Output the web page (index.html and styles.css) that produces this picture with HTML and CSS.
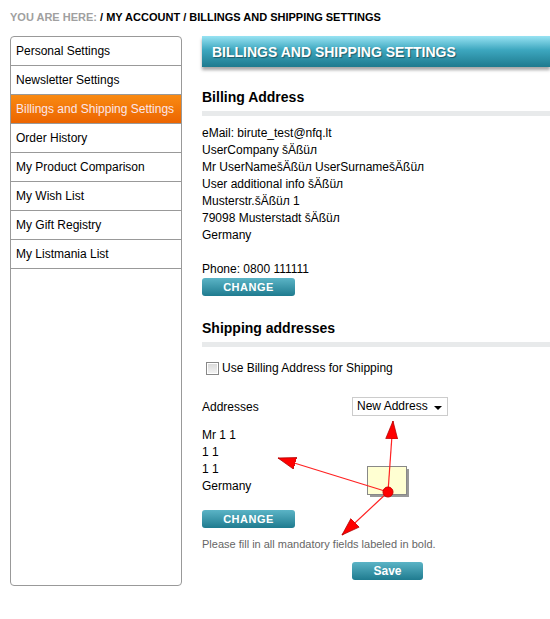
FILE: index.html
```html
<!DOCTYPE html>
<html lang="en">
<head>
  <meta charset="UTF-8">
  <title>My Account - Billings and Shipping Settings</title>
  <link rel="stylesheet" href="styles.css">
</head>
<body>
  <!-- Breadcrumb -->
  <div class="breadcrumb">
    <span class="here">You are here:</span> / My Account / Billings and Shipping Settings
  </div>

  <div class="page">
    <!-- Account menu -->
    <div class="sidebar">
      <a href="#">Personal Settings</a>
      <a href="#">Newsletter Settings</a>
      <a href="#" class="active">Billings and Shipping Settings</a>
      <a href="#">Order History</a>
      <a href="#">My Product Comparison</a>
      <a href="#">My Wish List</a>
      <a href="#">My Gift Registry</a>
      <a href="#">My Listmania List</a>
    </div>

    <div class="content">
      <h1 class="title-bar">Billings and Shipping Settings</h1>

      <h3 class="section-title">Billing Address</h3>
      <div class="section-line"></div>
      <div class="address">
        eMail: birute_test@nfq.lt<br>
        UserCompany šÄßüл<br>
        Mr UserNamešÄßüл UserSurnamešÄßüл<br>
        User additional info šÄßüл<br>
        Musterstr.šÄßüл 1<br>
        79098 Musterstadt šÄßüл<br>
        Germany<br>
        <br>
        Phone: 0800 111111
      </div>
      <a href="#" class="btn">Change</a>

      <h3 class="section-title shipping">Shipping addresses</h3>
      <div class="section-line"></div>

      <label class="check-row">
        <span class="checkbox"></span> Use Billing Address for Shipping
      </label>

      <div class="address-row">
        <span class="row-label">Addresses</span>
        <div class="select">New Address <span class="caret"></span></div>
      </div>

      <div class="address ship">
        Mr 1 1<br>
        1 1<br>
        1 1<br>
        Germany
      </div>
      <a href="#" class="btn btn-change2">Change</a>

      <p class="note">Please fill in all mandatory fields labeled in bold.</p>
      <a href="#" class="btn btn-save">Save</a>
    </div>
  </div>

  <!-- Help note pointing at the form -->
  <svg class="annotations" width="550" height="619" viewBox="0 0 550 619">
    <defs>
      <marker id="head" markerUnits="userSpaceOnUse" markerWidth="20" markerHeight="14" refX="18" refY="7" orient="auto">
        <path d="M0,1 L18,7 L0,13 z" fill="#f00" stroke="#a00" stroke-width="0.7"/>
      </marker>
    </defs>
    <rect x="370" y="469" width="39" height="28" fill="#999"/>
    <rect x="367.5" y="466.5" width="39" height="28" fill="#ffffd2" stroke="#888"/>
    <line x1="388" y1="492" x2="393" y2="421" stroke="#f22" stroke-width="1.2" marker-end="url(#head)"/>
    <line x1="388" y1="492" x2="278" y2="458" stroke="#f22" stroke-width="1.2" marker-end="url(#head)"/>
    <line x1="388" y1="492" x2="342" y2="535" stroke="#f22" stroke-width="1.2" marker-end="url(#head)"/>
    <circle cx="388" cy="492" r="5" fill="#f00" stroke="#c00"/>
  </svg>
</body>
</html>
```

FILE: styles.css
```css
body {
  margin: 0;
  font-family: "Liberation Sans", Arial, sans-serif;
  font-size: 12px;
  color: #000;
  background-color: #fff;
  overflow: hidden;
}

.breadcrumb {
  padding: 10px 10px 0;
  height: 36px;
  box-sizing: border-box;
  font-size: 11px;
  line-height: 14px;
  font-weight: bold;
  text-transform: uppercase;
}

.breadcrumb .here {
  color: #a0a0a0;
}

.page {
  display: flex;
  gap: 20px;
  padding-left: 10px;
}

/* Account menu */
.sidebar {
  width: 170px;
  height: 548px;
  flex-shrink: 0;
  border: 1px solid #999;
  border-radius: 4px;
}

.sidebar a {
  display: block;
  height: 28px;
  line-height: 28px;
  padding-left: 5px;
  border-bottom: 1px solid #999;
  color: #000;
  text-decoration: none;
  font-size: 12px;
}

.sidebar a.active {
  background: linear-gradient(#f98a12, #ec6500);
  color: #fbe6ea;
}

.content {
  flex: 1;
}

.title-bar {
  margin: 0;
  height: 31px;
  line-height: 32px;
  padding-left: 10px;
  background: linear-gradient(#98e3f3, #3da7bf 45%, #1e7a8e);
  box-shadow: 0 3px 3px rgba(0, 0, 0, 0.35);
  color: #fff;
  font-size: 14px;
  text-transform: uppercase;
  text-shadow: 1px 1px 1px rgba(0, 0, 0, 0.4);
}

.section-title {
  margin: 21px 0 5px;
  font-size: 14px;
  line-height: 18px;
}

.section-title.shipping {
  margin-top: 23px;
}

.section-line {
  height: 5px;
  background-color: #e8eaeb;
}

.address {
  margin-top: 9px;
  line-height: 17px;
}

.btn {
  display: block;
  width: 93px;
  height: 18px;
  line-height: 18px;
  border-radius: 3px;
  background: linear-gradient(#5bb4c6, #1f7b8f);
  color: #fff;
  text-align: center;
  text-decoration: none;
  text-transform: uppercase;
  font-size: 11px;
  font-weight: bold;
  letter-spacing: 0.5px;
}

.btn-change2 {
  margin-top: 15px;
}

.btn-save {
  width: 71px;
  margin: 11px 0 0 150px;
  text-transform: none;
  font-size: 12px;
  letter-spacing: 0;
}

.check-row {
  display: flex;
  align-items: center;
  gap: 3px;
  margin: 13px 0 0 4px;
  line-height: 16px;
}

.checkbox {
  display: inline-block;
  width: 11px;
  height: 11px;
  border: 1px solid #888;
  background: linear-gradient(#d8d8d8, #f4f4f4);
  box-shadow: inset 0 0 0 1px #fff;
}

.address-row {
  display: flex;
  align-items: center;
  margin-top: 21px;
}

.row-label {
  width: 150px;
}

.select {
  position: relative;
  width: 90px;
  height: 17px;
  line-height: 17px;
  padding-left: 4px;
  border: 1px solid #ccc;
  font-size: 12px;
}

.caret {
  position: absolute;
  right: 5px;
  top: 8px;
  border-left: 4px solid transparent;
  border-right: 4px solid transparent;
  border-top: 4px solid #000;
}

.address.ship {
  margin-top: 11px;
}

.note {
  margin: 9px 0 0;
  font-size: 11px;
  line-height: 14px;
  color: #666;
}

.annotations {
  position: absolute;
  top: 0;
  left: 0;
  pointer-events: none;
}
```
